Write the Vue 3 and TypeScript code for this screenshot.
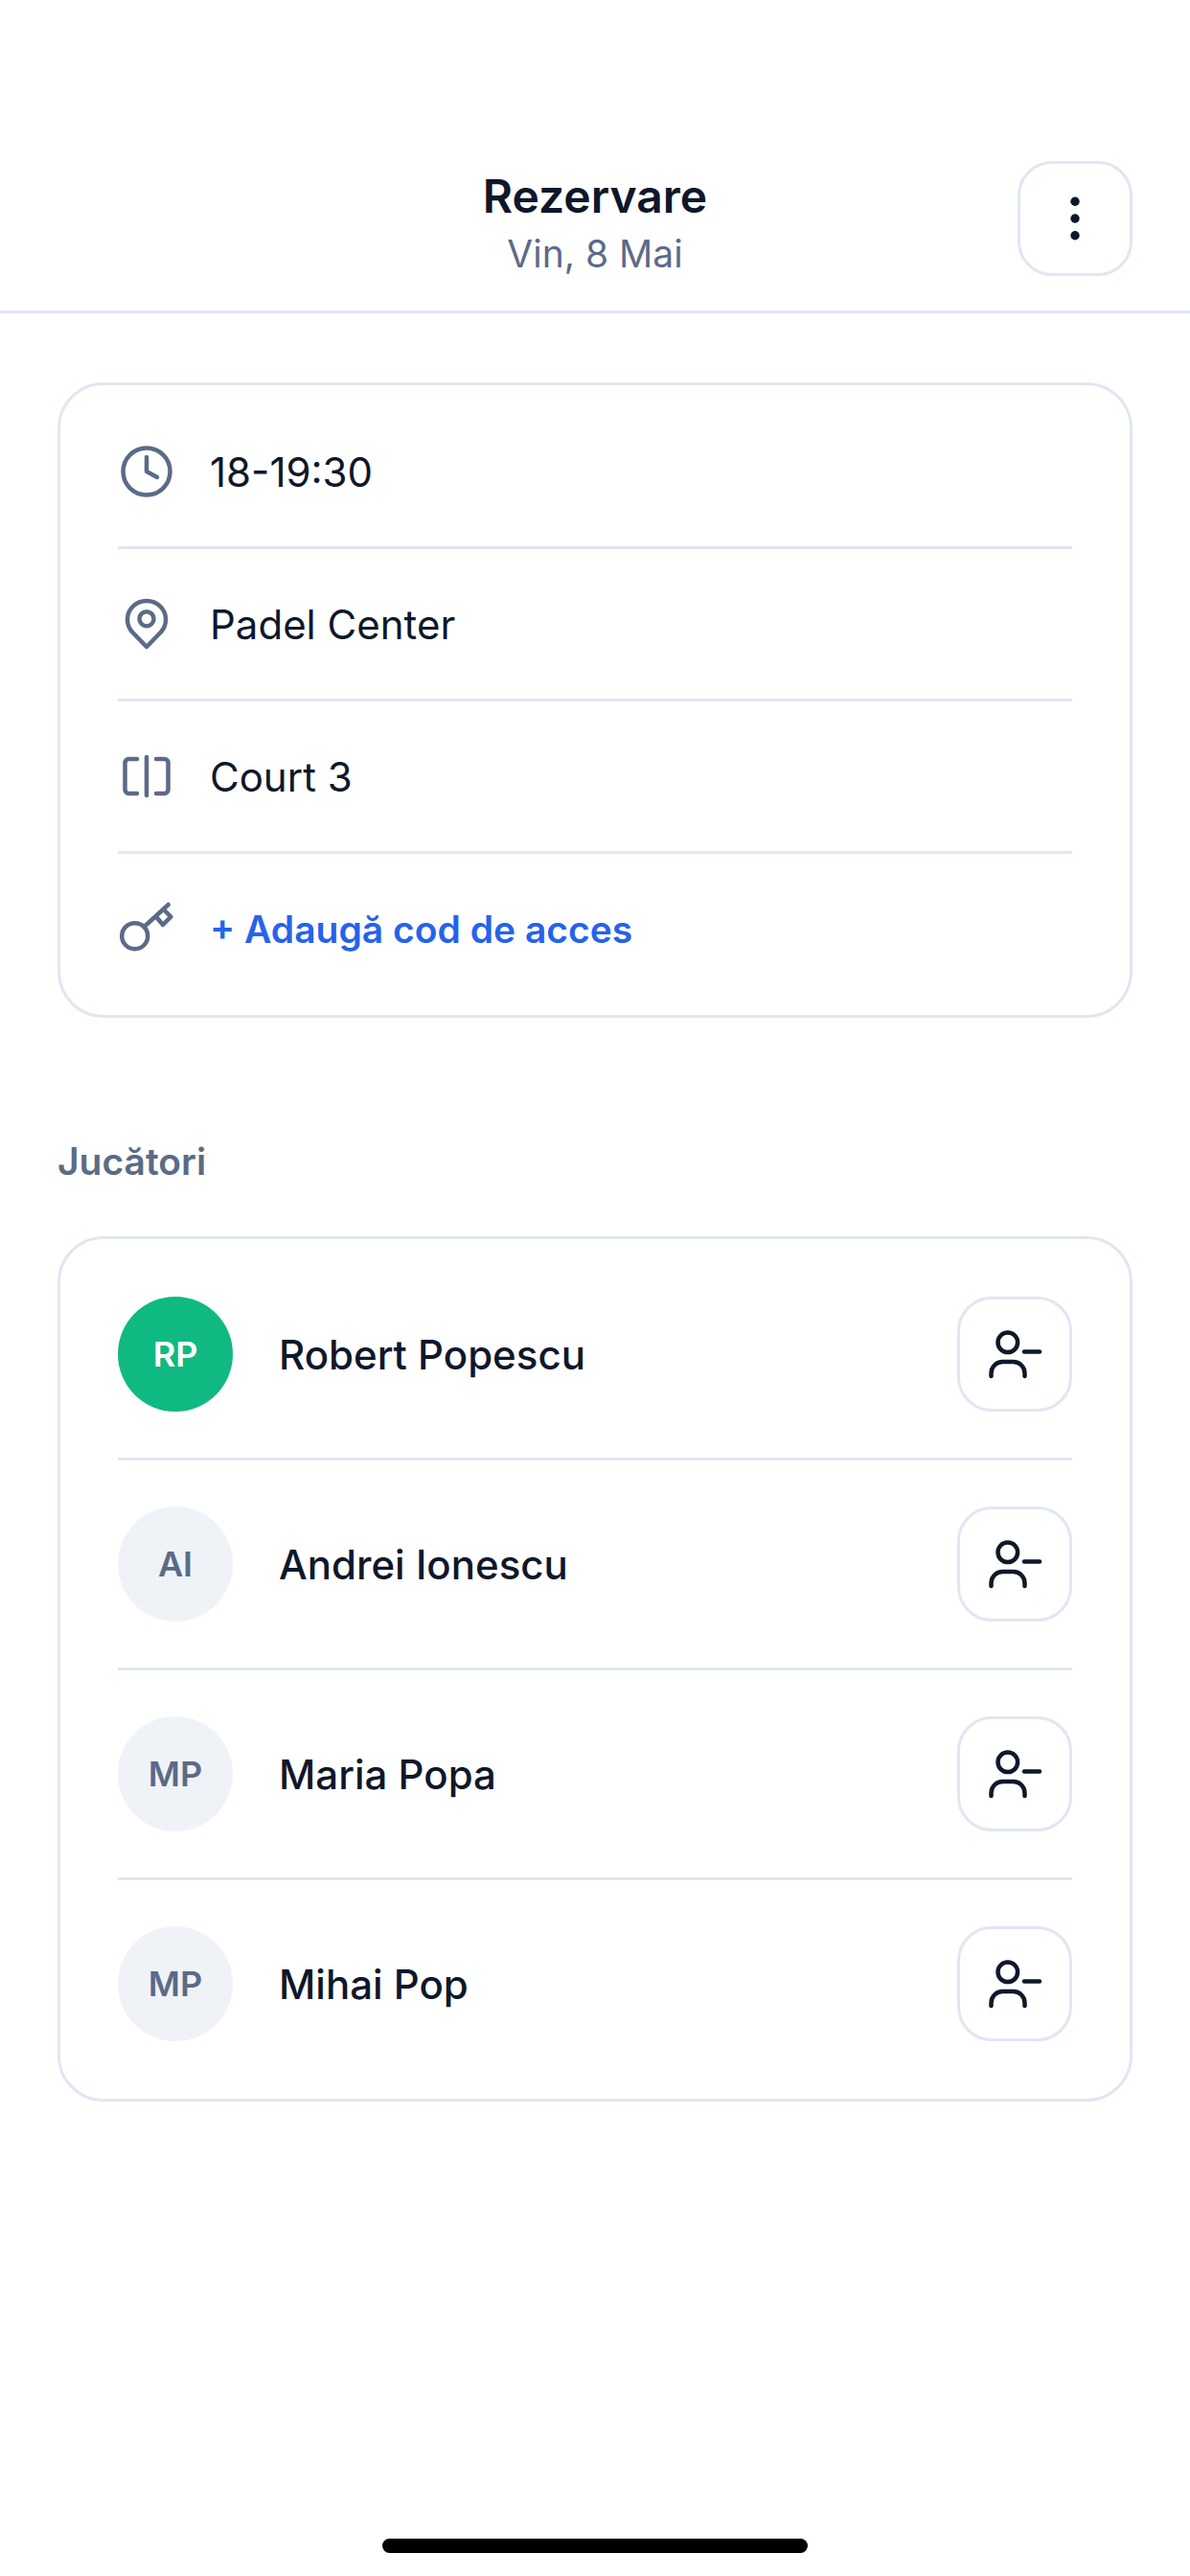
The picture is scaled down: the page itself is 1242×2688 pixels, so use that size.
<script setup lang="ts">
interface Player {
  initials: string
  name: string
  self?: boolean
}

const players: Player[] = [
  { initials: 'RP', name: 'Robert Popescu', self: true },
  { initials: 'AI', name: 'Andrei Ionescu' },
  { initials: 'MP', name: 'Maria Popa' },
  { initials: 'MP', name: 'Mihai Pop' },
]
</script>

<template>
  <div class="page">
    <header class="header">
      <div class="titles">
        <div class="title">Rezervare</div>
        <div class="subtitle">Vin, 8 Mai</div>
      </div>
      <button class="square-btn" type="button" aria-label="Meniu">
        <svg width="72" height="72" viewBox="0 0 72 72" fill="#0f172a">
          <circle cx="36" cy="18.3" r="4.7" />
          <circle cx="36" cy="36" r="4.7" />
          <circle cx="36" cy="53.7" r="4.7" />
        </svg>
      </button>
    </header>

    <main class="content">
      <section class="card info-card">
        <div class="info-row">
          <svg class="icon" width="60" height="60" viewBox="0 0 60 60">
            <circle cx="30" cy="30" r="24.5" />
            <path d="M30 15V30L41 36" />
          </svg>
          <span class="info-text">18-19:30</span>
        </div>
        <div class="info-row">
          <svg class="icon" width="60" height="60" viewBox="0 0 60 60">
            <path d="M30 54L15 38.5C11.5 34.5 10 30 10 25.5C10 14.5 19 6 30 6C41 6 50 14.5 50 25.5C50 30 48.5 34.5 45 38.5Z" />
            <circle cx="30" cy="24.7" r="7.5" />
          </svg>
          <span class="info-text">Padel Center</span>
        </div>
        <div class="info-row">
          <svg class="icon" width="60" height="60" viewBox="0 0 60 60">
            <path d="M20 12H11.5A4 4 0 0 0 7.500 16V44A4 4 0 0 0 11.500 48H20" />
            <path d="M40 12H48.500A4 4 0 0 1 52.500 16V44A4 4 0 0 1 48.500 48H40" />
            <path d="M30 10V50" />
          </svg>
          <span class="info-text">Court 3</span>
        </div>
        <div class="info-row">
          <svg class="icon" width="60" height="60" viewBox="0 0 60 60">
            <circle cx="17.700" cy="37.700" r="13.500" />
            <path d="M27.500 28L52.700 5" />
            <path d="M40.300 18L47 26L55.300 17.700L48.700 11" />
          </svg>
          <span class="add-code">+ Adaugă cod de acces</span>
        </div>
      </section>

      <h2 class="section-label">Jucători</h2>

      <section class="card players-card">
        <div v-for="player in players" :key="player.name" class="player-row">
          <div class="avatar" :class="{ 'avatar-self': player.self }">{{ player.initials }}</div>
          <span class="player-name">{{ player.name }}</span>
          <button class="square-btn" type="button" aria-label="Elimină jucător">
            <svg class="icon-dark" width="72" height="72" viewBox="0 0 72 72">
              <circle cx="28.800" cy="23.800" r="10.300" />
              <path d="M11.500 59V56A12 12 0 0 1 23.500 44H34.500A12 12 0 0 1 46.500 56V59" />
              <path d="M46 33.500H62" />
            </svg>
          </button>
        </div>
      </section>
    </main>

    <div class="home-indicator"></div>
  </div>
</template>

<style scoped>
.page {
  width: 1242px;
  height: 2688px;
  background: #ffffff;
  display: flex;
  flex-direction: column;
  font-family: Inter, "Liberation Sans", sans-serif;
  color: #0f172a;
  box-sizing: border-box;
}
.header {
  height: 327px;
  box-sizing: border-box;
  padding: 168px 60px 0;
  border-bottom: 3px solid #e0e6f2;
  display: flex;
  justify-content: flex-end;
  position: relative;
}
.titles {
  position: absolute;
  left: 0;
  right: 0;
  top: 175px;
  text-align: center;
}
.title {
  font-size: 48px;
  font-weight: 600;
  line-height: 60px;
}
.subtitle {
  font-size: 39px;
  line-height: 60px;
  color: #5b6b87;
}
.square-btn {
  width: 120px;
  height: 120px;
  flex: none;
  box-sizing: border-box;
  background: #ffffff;
  border: 3px solid #e0e6f2;
  border-radius: 36px;
  padding: 0;
  display: flex;
  align-items: center;
  justify-content: center;
}
.content {
  padding: 72px 60px 0;
  flex: 1;
  display: flex;
  flex-direction: column;
}
.card {
  border: 3px solid #e0e6f2;
  border-radius: 48px;
  padding: 12px 60px;
  background: #ffffff;
}
.info-row {
  height: 156px;
  display: flex;
  align-items: center;
  gap: 36px;
}
.info-row + .info-row,
.player-row + .player-row {
  border-top: 3px solid #e0e6f2;
}
.icon {
  flex: none;
  fill: none;
  stroke: #5b6b87;
  stroke-width: 4.500;
  stroke-linecap: round;
  stroke-linejoin: round;
}
.icon-dark {
  fill: none;
  stroke: #0f172a;
  stroke-width: 4.500;
  stroke-linecap: round;
  stroke-linejoin: round;
}
.info-text {
  font-size: 42px;
}
.add-code {
  font-size: 39px;
  font-weight: 600;
  color: #2563eb;
}
.section-label {
  margin: 123px 0 51px;
  font-size: 39px;
  line-height: 54px;
  font-weight: 600;
  color: #5b6b87;
}
.player-row {
  height: 216px;
  display: flex;
  align-items: center;
  gap: 48px;
}
.avatar {
  width: 120px;
  height: 120px;
  flex: none;
  border-radius: 50%;
  background: #eff3f8;
  color: #5b6b87;
  font-size: 36px;
  font-weight: 600;
  display: flex;
  align-items: center;
  justify-content: center;
}
.avatar-self {
  background: #10b981;
  color: #ffffff;
}
.player-name {
  flex: 1;
  font-size: 42px;
  font-weight: 500;
}
.home-indicator {
  width: 444px;
  height: 15px;
  border-radius: 8px;
  background: #000000;
  align-self: center;
  margin-bottom: 24px;
}
</style>
